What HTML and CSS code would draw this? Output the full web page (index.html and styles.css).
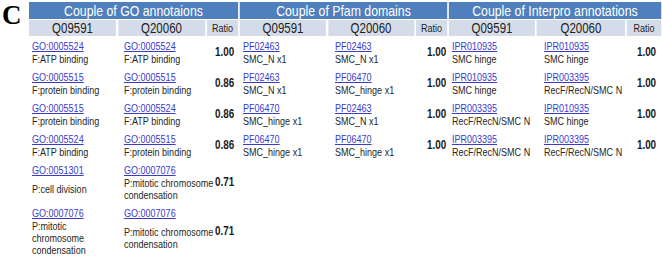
FILE: index.html
```html
<!DOCTYPE html>
<html>
<head>
<meta charset="utf-8">
<link rel="stylesheet" href="styles.css">
</head>
<body>
<div class="figure">
  <div class="label">C</div>

  <div class="tables">
  <section class="panel go">
    <div class="title">Couple of GO annotaions</div>
    <div class="heads"><div>Q09591</div><div>Q20060</div><div class="ratio-h">Ratio</div></div>
    <div class="rows">
      <div class="pair">
        <a href="#">GO:0005524</a><a href="#">GO:0005524</a><b class="ratio">1.00</b>
        <span class="desc">F:ATP binding</span><span class="desc">F:ATP binding</span>
      </div>
      <div class="pair">
        <a href="#">GO:0005515</a><a href="#">GO:0005515</a><b class="ratio">0.86</b>
        <span class="desc">F:protein binding</span><span class="desc">F:protein binding</span>
      </div>
      <div class="pair">
        <a href="#">GO:0005515</a><a href="#">GO:0005524</a><b class="ratio">0.86</b>
        <span class="desc">F:protein binding</span><span class="desc">F:ATP binding</span>
      </div>
      <div class="pair">
        <a href="#">GO:0005524</a><a href="#">GO:0005515</a><b class="ratio">0.86</b>
        <span class="desc">F:ATP binding</span><span class="desc">F:protein binding</span>
      </div>
      <div class="pair">
        <a href="#">GO:0051301</a><a href="#">GO:0007076</a><b class="ratio">0.71</b>
        <span class="desc">P:cell division</span><span class="desc">P:mitotic chromosome condensation</span>
      </div>
      <div class="pair">
        <a href="#">GO:0007076</a><a href="#">GO:0007076</a><b class="ratio">0.71</b>
        <span class="desc">P:mitotic chromosome condensation</span><span class="desc">P:mitotic chromosome condensation</span>
      </div>
    </div>
  </section>

  <section class="panel pfam">
    <div class="title">Couple of Pfam domains</div>
    <div class="heads"><div>Q09591</div><div>Q20060</div><div class="ratio-h">Ratio</div></div>
    <div class="rows">
      <div class="pair">
        <a href="#">PF02463</a><a href="#">PF02463</a><b class="ratio">1.00</b>
        <span class="desc">SMC_N x1</span><span class="desc">SMC_N x1</span>
      </div>
      <div class="pair">
        <a href="#">PF02463</a><a href="#">PF06470</a><b class="ratio">1.00</b>
        <span class="desc">SMC_N x1</span><span class="desc">SMC_hinge x1</span>
      </div>
      <div class="pair">
        <a href="#">PF06470</a><a href="#">PF02463</a><b class="ratio">1.00</b>
        <span class="desc">SMC_hinge x1</span><span class="desc">SMC_N x1</span>
      </div>
      <div class="pair">
        <a href="#">PF06470</a><a href="#">PF06470</a><b class="ratio">1.00</b>
        <span class="desc">SMC_hinge x1</span><span class="desc">SMC_hinge x1</span>
      </div>
    </div>
  </section>

  <section class="panel ipr">
    <div class="title">Couple of Interpro annotations</div>
    <div class="heads"><div>Q09591</div><div>Q20060</div><div class="ratio-h">Ratio</div></div>
    <div class="rows">
      <div class="pair">
        <a href="#">IPR010935</a><a href="#">IPR010935</a><b class="ratio">1.00</b>
        <span class="desc">SMC hinge</span><span class="desc">SMC hinge</span>
      </div>
      <div class="pair">
        <a href="#">IPR010935</a><a href="#">IPR003395</a><b class="ratio">1.00</b>
        <span class="desc">SMC hinge</span><span class="desc">RecF/RecN/SMC N</span>
      </div>
      <div class="pair">
        <a href="#">IPR003395</a><a href="#">IPR010935</a><b class="ratio">1.00</b>
        <span class="desc">RecF/RecN/SMC N</span><span class="desc">SMC hinge</span>
      </div>
      <div class="pair">
        <a href="#">IPR003395</a><a href="#">IPR003395</a><b class="ratio">1.00</b>
        <span class="desc">RecF/RecN/SMC N</span><span class="desc">RecF/RecN/SMC N</span>
      </div>
    </div>
  </section>
  </div>
</div>
</body>
</html>
```

FILE: styles.css
```css
html, body {
  margin: 0;
  padding: 0;
  background: #ffffff;
  overflow: hidden;
}

body {
  font-family: "Liberation Sans", Arial, sans-serif;
  color: #2a2a2a;
}

.figure {
  display: flex;
  align-items: flex-start;
  padding-top: 2px;
}

.label {
  flex: none;
  width: 27px;
  padding-left: 2px;
  font-family: "Liberation Serif", "Times New Roman", serif;
  font-weight: bold;
  font-size: 27px;
  line-height: 27px;
  color: #000;
}

/* the tables of the source figure are horizontally condensed (Arial Narrow look) */
.tables {
  flex: none;
  display: flex;
  align-items: flex-start;
  gap: 2.44px;
  transform: scaleX(0.82);
  transform-origin: 0 0;
}

.panel {
  --c1: 112.2px;
  --c2: 111px;
  --h1: 106.1px;
  --h2: 106.1px;
  --h3: 37.8px;
  display: flex;
  flex-direction: column;
}

.go { width: 254.9px; }
.pfam { width: 252.4px; --c2: 112.2px; --h1: 104.9px; --h2: 104.9px; --h3: 37.8px; }
.ipr { width: 258.5px; --c2: 113.4px; --h1: 104.9px; --h2: 107.3px; --h3: 41.5px; }

.title {
  height: 17px;
  line-height: 17px;
  background: #4f80bd;
  color: #ffffff;
  font-size: 15px;
  text-align: center;
}

.heads {
  display: grid;
  grid-template-columns: var(--h1) var(--h2) var(--h3);
  column-gap: 2.44px;
  margin-top: 1px;
}

.heads > div {
  height: 16px;
  line-height: 16px;
  background: #d5dce9;
  color: #1e1e1e;
  font-size: 14px;
  text-align: center;
}

.heads > .ratio-h {
  font-size: 11px;
}

.rows {
  display: flex;
  flex-direction: column;
  gap: 6px;
  padding-top: 4px;
  padding-left: 3.66px;
}

.pair {
  display: grid;
  grid-template-columns: var(--c1) var(--c2) auto;
  font-size: 11px;
}

.pair a {
  line-height: 13px;
  color: #3a3acc;
  text-decoration: underline;
}

.pair .desc {
  align-self: center;
  line-height: 12px;
  color: #262626;
  padding-right: 6.1px;
}

.pair .desc:nth-of-type(2) {
  padding-right: 0;
}

.pair .ratio {
  grid-column: 3;
  grid-row: 1 / span 2;
  align-self: center;
  line-height: 13px;
  color: #1a1a1a;
  font-size: 12px;
  font-weight: bold;
}
```
